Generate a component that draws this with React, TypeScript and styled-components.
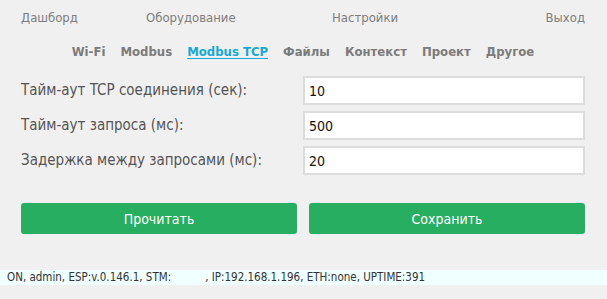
import styled, { createGlobalStyle } from "styled-components";

const GlobalStyle = createGlobalStyle`
  html, body {
    margin: 0;
    padding: 0;
    background: #f0f0f0;
    font-family: "DejaVu Sans Condensed", "DejaVu Sans", sans-serif;
  }
`;

const Page = styled.div`
  width: 607px;
  height: 299px;
  background: #f0f0f0;
  display: flex;
  flex-direction: column;
`;

const Content = styled.div`
  padding: 0 22px 0 21px;
`;

const TopNav = styled.nav`
  display: grid;
  grid-template-columns: 125px 186px 1fr auto;
  height: 34px;
  align-items: center;
  font-size: 13px;
  color: #7d7d7d;
`;

const NavLink = styled.span`
  white-space: nowrap;
`;

const Tabs = styled.div`
  display: flex;
  justify-content: center;
  gap: 15px;
  height: 34px;
  align-items: center;
`;

const Tab = styled.span<{ $active?: boolean }>`
  font-size: 13px;
  font-weight: bold;
  color: ${(p) => (p.$active ? "#18a8d8" : "#7b7b7b")};
  text-decoration: ${(p) => (p.$active ? "underline" : "none")};
  text-underline-offset: 2px;
`;

const Form = styled.div`
  margin-top: 8px;
  display: flex;
  flex-direction: column;
  gap: 6px;
`;

const Row = styled.div`
  display: grid;
  grid-template-columns: 282px 1fr;
  align-items: center;
`;

const Label = styled.label`
  font-size: 15px;
  color: #555;
  margin-top: -1px;
`;

const Input = styled.input`
  box-sizing: border-box;
  height: 29px;
  width: 100%;
  border: 2px solid #dcdcdc;
  background: #fff;
  padding: 0 4px;
  font-family: inherit;
  font-size: 14px;
  color: #111;
  outline: none;
`;

const Buttons = styled.div`
  margin-top: 28px;
  display: grid;
  grid-template-columns: 1fr 1fr;
  gap: 12px;
`;

const Button = styled.button`
  height: 31px;
  border: none;
  border-radius: 3px;
  background: #27ae60;
  color: #fff;
  font-family: inherit;
  font-size: 14px;
`;

const StatusBar = styled.div`
  margin-top: 36px;
  height: 15px;
  background: #f0ffff;
  font-size: 11.5px;
  line-height: 15px;
  color: #333;
  padding-left: 7px;
  white-space: nowrap;
`;

const Blank = styled.span`
  display: inline-block;
  width: 34px;
`;

const tabs = ["Wi-Fi", "Modbus", "Modbus TCP", "Файлы", "Контекст", "Проект", "Другое"];

const fields = [
  { label: "Тайм-аут TCP соединения (сек):", value: "10" },
  { label: "Тайм-аут запроса (мс):", value: "500" },
  { label: "Задержка между запросами (мс):", value: "20" },
];

export default function App() {
  return (
    <Page>
      <GlobalStyle />
      <Content>
        <TopNav>
          <NavLink>Дашборд</NavLink>
          <NavLink>Оборудование</NavLink>
          <NavLink>Настройки</NavLink>
          <NavLink>Выход</NavLink>
        </TopNav>
        <Tabs>
          {tabs.map((t) => (
            <Tab key={t} $active={t === "Modbus TCP"}>
              {t}
            </Tab>
          ))}
        </Tabs>
        <Form>
          {fields.map((f) => (
            <Row key={f.label}>
              <Label>{f.label}</Label>
              <Input defaultValue={f.value} />
            </Row>
          ))}
        </Form>
        <Buttons>
          <Button>Прочитать</Button>
          <Button>Сохранить</Button>
        </Buttons>
      </Content>
      <StatusBar>
        ON, admin, ESP:v.0.146.1, STM:<Blank />, IP:192.168.1.196, ETH:none, UPTIME:391
      </StatusBar>
    </Page>
  );
}
